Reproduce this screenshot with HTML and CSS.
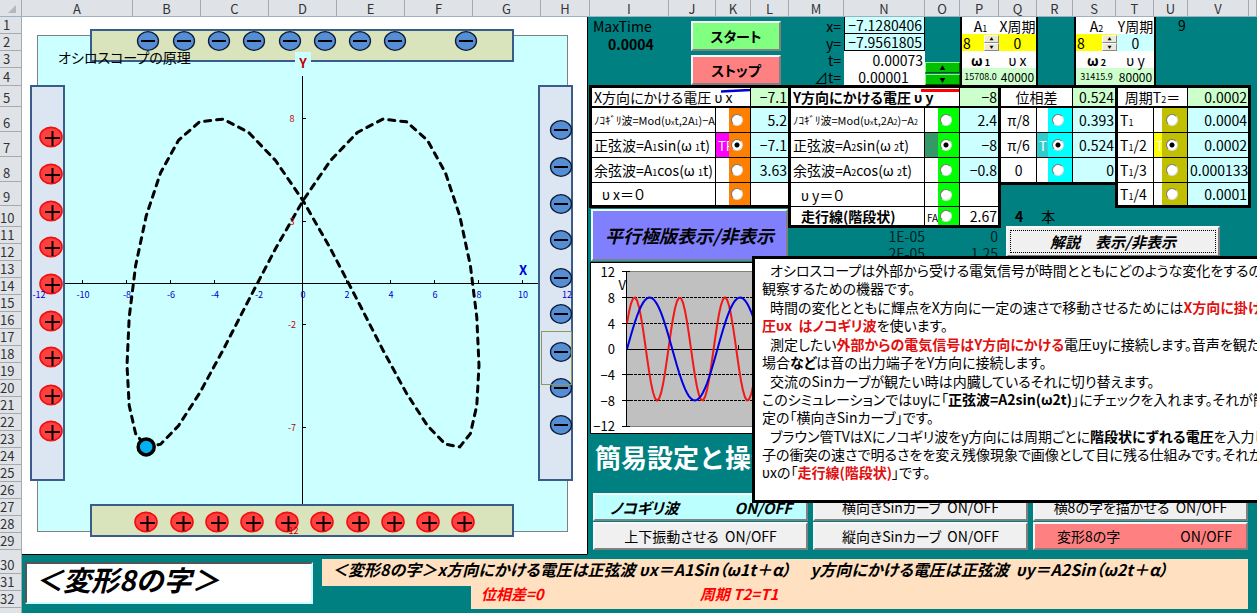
FILE: index.html
```
<!DOCTYPE html>
<html lang="ja">
  <head>
    <meta charset="UTF-8" />
    <meta name="viewport" content="width=device-width, initial-scale=1.0" />
    <title>オシロスコープの原理</title>
    <link rel="stylesheet" href="styles.css">
  </head>
  <body>
    <div class="sheet">
      <div class="cols" id="cols"></div>
      <div class="body">
        <div class="rows" id="rows"></div>
        <div class="main">
          <div class="upper">
            <!-- oscilloscope screen -->
            <svg class="scope" width="566" height="538" viewBox="22 17 566 538">
              <defs>
                <g id="minus">
                  <ellipse rx="10.5" ry="9.3" fill="#558ed5" stroke="#0d1a30" stroke-width="1.3" />
                  <path d="M-7 0H7" stroke="#000" stroke-width="2" />
                </g>
                <g id="plus">
                  <ellipse rx="11" ry="9.6" fill="#ff4040" stroke="#f01010" stroke-width="1.6" />
                  <path d="M-6 1H9M1.500 -6V9" stroke="#100" stroke-width="2" />
                </g>
              </defs>
              <rect x="22" y="17" width="566" height="538" fill="#fff" />
              <path d="M22 554.500H587.500V17" fill="none" stroke="#000" />
              <rect x="37.500" y="35.500" width="530" height="496" fill="#cff" stroke="#808080" />
              <path d="M302.500 76V531M37 283.500H568" stroke="#000" fill="none" />
              <path id="ticks" stroke="#000" fill="none" />
              <rect class="plate-y" x="91" y="30" width="422" height="31" />
              <rect class="plate-y" x="91" y="505" width="422" height="31" />
              <rect class="plate-x" x="31" y="86" width="33" height="394" />
              <rect class="plate-x" x="539" y="86" width="33" height="394" />
              <path id="curve" class="curve" />
              <g id="charges"></g>
              <rect x="541.500" y="331.500" width="30" height="53" fill="none" stroke="#8b9a5b" />
              <rect x="295" y="52" width="16" height="17" fill="#cff" />
              <text class="axis-name red" x="303" y="68">Y</text>
              <text class="axis-name blue" x="523" y="275">X</text>
              <g id="labels"></g>
              <circle id="spot" r="8" fill="#00b0f0" stroke="#000" stroke-width="3.500" />
              <text class="scope-title" x="58" y="63">オシロスコープの原理</text>
            </svg>

            <div class="panel">
              <div class="status">
                <div class="maxtime">
                  <div>MaxTime</div>
                  <b>0.0004</b>
                </div>
                <div class="run">
                  <button class="btn start">スタート</button>
                  <button class="btn stop">ストップ</button>
                </div>
                <table class="now">
                  <tr><th>x=</th><td class="calc">−7.1280406</td></tr>
                  <tr><th>y=</th><td class="calc">−7.9561805</td></tr>
                  <tr><th>t=</th><td>0.00073</td></tr>
                  <tr><th>⊿t=</th><td class="mid">0.00001</td></tr>
                </table>
                <div class="step">
                  <button aria-label="dt up">▲</button>
                  <button aria-label="dt down">▼</button>
                </div>
                <table class="amp ampx">
                  <tr><td>A<small>1</small></td><td>X周期</td></tr>
                  <tr>
                    <td class="yellow"><div class="spin"><span>8</span><span class="arrows"><button aria-label="A1 up">▲</button><button aria-label="A1 down">▼</button></span></div></td>
                    <td class="yellow">0</td>
                  </tr>
                  <tr><td><b>ω<small> 1</small></b></td><td>υ x</td></tr>
                  <tr><td class="lime tiny">15708.0</td><td class="lime narrow">40000</td></tr>
                </table>
                <table class="amp ampy">
                  <tr><td>A<small>2</small></td><td>Y周期</td></tr>
                  <tr>
                    <td class="yellow"><div class="spin"><span>8</span><span class="arrows"><button aria-label="A2 up">▲</button><button aria-label="A2 down">▼</button></span></div></td>
                    <td class="cyan">0</td>
                  </tr>
                  <tr><td><b>ω<small> 2</small></b></td><td>υ y</td></tr>
                  <tr><td class="lime tiny">31415.9</td><td class="lime narrow">80000</td></tr>
                </table>
                <div class="nine">9</div>
              </div>

              <div class="tables">
                <div class="left">
                  <table class="set setx">
                    <colgroup><col class="w124"><col class="w35"><col class="w37"></colgroup>
                    <tr class="head"><td colspan="2">X方向にかける電圧 υ x<svg class="mark" width="29" height="4"><path d="M0 2.500L29 1" stroke="#0000d0" stroke-width="2.500" /></svg></td><td class="num lime">−7.1</td></tr>
                    <tr><td class="small"><label for="x1">ﾉｺｷﾞﾘ波=Mod(υ<sub>x</sub>t,2A<sub>1</sub>)−A<sub>1</sub></label></td><td class="opt"><span class="orange"><input type="radio" name="vx" id="x1"></span></td><td class="num cyan">5.2</td></tr>
                    <tr><td><label for="x2">正弦波=A<small>1</small>sin(ω <small>1</small>t)</label></td><td class="opt magenta"><i>TRUE</i><span class="orange"><input type="radio" name="vx" id="x2" checked></span></td><td class="num cyan">−7.1</td></tr>
                    <tr><td><label for="x3">余弦波=A<small>1</small>cos(ω <small>1</small>t)</label></td><td class="opt"><span class="orange"><input type="radio" name="vx" id="x3"></span></td><td class="num cyan">3.63</td></tr>
                    <tr><td class="indent"><label for="x4">υ x＝０</label></td><td class="opt"><span class="orange"><input type="radio" name="vx" id="x4"></span></td><td></td></tr>
                  </table>
                  <button class="btn plates">平行極版表示/非表示</button>
                  <svg class="wave" width="199" height="172" viewBox="590 262 199 172">
                    <rect x="590.500" y="262.500" width="198" height="171" fill="#fff" stroke="#000" />
                    <rect x="626" y="271" width="163" height="156" fill="#c0c0c0" />
                    <path d="M626 271.500H789M626 426.500H789" stroke="#808080" />
                    <path d="M626 297.500H789M626 323.500H789M626 374.500H789M626 400.500H789" stroke="#000" stroke-dasharray="3 1" />
                    <path d="M626.500 271V427M626 349.500H789M738.500 345V349M622 271.500H630M622 297.500H630M622 323.500H630M622 374.500H630M622 400.500H630M622 426.500H630" stroke="#000" />
                    <path id="wave2" fill="none" stroke="#f01818" stroke-width="2" />
                    <path id="wave1" fill="none" stroke="#0000e0" stroke-width="2" />
                    <g class="wave-label">
                      <text x="615" y="277">12</text>
                      <text x="615" y="303">8</text>
                      <text x="615" y="329">4</text>
                      <text x="615" y="354">0</text>
                      <text x="615" y="380">−4</text>
                      <text x="615" y="406">−8</text>
                      <text x="615" y="431">−12</text>
                      <text x="626" y="290">V</text>
                    </g>
                  </svg>
                  <h2>簡易設定と操作</h2>
                </div>

                <div class="center">
                  <table class="set sety">
                    <colgroup><col class="w134"><col class="w35"><col class="w38"></colgroup>
                    <tr class="head"><td colspan="2"><b>Y方向にかける電圧 υ y</b><svg class="mark" width="38" height="3"><path d="M0 1.500H38" stroke="#f00" stroke-width="3" /></svg></td><td class="num lime">−8</td></tr>
                    <tr><td class="small"><label for="y1">ﾉｺｷﾞﾘ波=Mod(υ<sub>x</sub>t,2A<sub>2</sub>)−A<sub>2</sub></label></td><td class="opt"><span class="green"><input type="radio" name="vy" id="y1"></span></td><td class="num cyan">2.4</td></tr>
                    <tr><td><label for="y2">正弦波=A<small>2</small>sin(ω <small>2</small>t)</label></td><td class="opt sea"><span class="green"><input type="radio" name="vy" id="y2" checked></span></td><td class="num cyan">−8</td></tr>
                    <tr><td><label for="y3">余弦波=A<small>2</small>cos(ω <small>2</small>t)</label></td><td class="opt"><span class="green"><input type="radio" name="vy" id="y3"></span></td><td class="num cyan">−0.8</td></tr>
                    <tr><td class="indent"><label for="y4">υ y＝０</label></td><td class="opt"><span class="green"><input type="radio" name="vy" id="y4"></span></td><td></td></tr>
                    <tr class="low"><td class="indent"><label for="y5"><b>走行線(階段状)</b></label></td><td class="opt false"><i>FALSE</i><span class="green"><input type="radio" name="vy" id="y5"></span></td><td class="num">2.67</td></tr>
                  </table>
                  <div class="cells"><span>1E-05</span><span>0</span></div>
                  <div class="cells"><span>2E-05</span><span>1.25</span></div>
                </div>

                <div class="right">
                  <div class="pair">
                    <table class="set phase">
                      <colgroup><col class="w36"><col class="w36"><col class="w42"></colgroup>
                      <tr class="head"><td colspan="2" class="mid">位相差</td><td class="num lime">0.524</td></tr>
                      <tr><td class="mid"><label for="p1">π/8</label></td><td class="opt"><span class="aqua"><input type="radio" name="ph" id="p1"></span></td><td class="num cyan">0.393</td></tr>
                      <tr><td class="mid"><label for="p2">π/6</label></td><td class="opt teal"><i>TRUE</i><span class="aqua"><input type="radio" name="ph" id="p2" checked></span></td><td class="num cyan">0.524</td></tr>
                      <tr><td class="mid"><label for="p3">0</label></td><td class="opt"><span class="aqua"><input type="radio" name="ph" id="p3"></span></td><td class="num cyan">0</td></tr>
                    </table>
                    <table class="set period">
                      <colgroup><col class="w36"><col class="w34"><col class="w60"></colgroup>
                      <tr class="head"><td colspan="2" class="mid">周期T<small>2</small>＝</td><td class="num lime">0.0002</td></tr>
                      <tr><td><label for="t1">T<small>1</small></label></td><td class="opt"><span class="olive"><input type="radio" name="tt" id="t1"></span></td><td class="num cyan">0.0004</td></tr>
                      <tr><td><label for="t2">T<small>1</small>/2</label></td><td class="opt yellow"><i>TRUE</i><span class="olive"><input type="radio" name="tt" id="t2" checked></span></td><td class="num cyan">0.0002</td></tr>
                      <tr><td><label for="t3">T<small>1</small>/3</label></td><td class="opt"><span class="olive"><input type="radio" name="tt" id="t3"></span></td><td class="num cyan">0.000133</td></tr>
                      <tr><td><label for="t4">T<small>1</small>/4</label></td><td class="opt"><span class="olive"><input type="radio" name="tt" id="t4"></span></td><td class="num cyan">0.0001</td></tr>
                    </table>
                  </div>
                  <div class="lines"><b>4</b><span>本</span></div>
                  <button class="btn explain-btn">解説　表示/非表示</button>
                </div>
              </div>

              <div class="modes">
                <button class="btn saw"><span>ノコギリ波</span><span>ON/OFF</span></button>
                <button class="btn">横向きSinカーブ&nbsp; ON/OFF</button>
                <button class="btn">横8の字を描かせる&nbsp; ON/OFF</button>
                <button class="btn">上下振動させる&nbsp; ON/OFF</button>
                <button class="btn">縦向きSinカーブ&nbsp; ON/OFF</button>
                <button class="btn eight"><span>変形8の字</span><span>ON/OFF</span></button>
              </div>

              <!-- help text, floats over the chart and the buttons -->
              <div class="explain">
                <p>オシロスコープは外部から受ける電気信号が時間とともにどのような変化をするのかを<br>観察するための機器です。</p>
                <p>時間の変化とともに輝点をX方向に一定の速さで移動させるためには<b class="hot">X方向に掛ける電</b><br><b class="hot">圧υx&nbsp; はノコギリ波</b>を使います。</p>
                <p>測定したい<b class="hot">外部からの電気信号はY方向にかける</b>電圧υyに接続します。音声を観たい<br>場合<b>など</b>は音の出力端子をY方向に接続します。</p>
                <p>交流のSinカーブが観たい時は内臓しているそれに切り替えます。<br>このシミュレーションではυyに「<b>正弦波=A2sin(ω2t)</b>」にチェックを入れます。それが簡易設<br>定の「横向きSinカーブ」です。</p>
                <p>ブラウン管TVはXにノコギリ波をy方向には周期ごとに<b>階段状にずれる電圧</b>を入力して<br>子の衝突の速さで明るさをを変え残像現象で画像として目に残る仕組みです。それが<br>υxの「<b class="hot">走行線(階段状)</b>」です。</p>
              </div>
            </div>
          </div>

          <div class="lower">
            <input class="mode-name" type="text" aria-label="モード" value="＜変形8の字＞">
            <div class="formula">
              <div class="f1">＜変形8の字＞x方向にかける電圧は正弦波 υx＝A1Sin（ω1t＋α）&nbsp;　y方向にかける電圧は正弦波&nbsp; υy＝A2Sin（ω2t＋α）</div>
              <div class="f2"><span>位相差=0</span><span>周期 T2=T1</span></div>
            </div>
          </div>
        </div>
      </div>
    </div>
    <script src="script.js"></script>
  </body>
</html>
```
FILE: styles.css
```
* {
  box-sizing: border-box;
}
body {
  margin: 0;
  background: #008080;
  font-family: "Noto Sans CJK JP", sans-serif;
  font-feature-settings: "palt";
  font-size: 14px;
  line-height: 17px;
  color: #000;
}
.sheet {
  display: flex;
  flex-direction: column;
  height: 100vh;
  overflow: hidden;
}
p,
h2 {
  margin: 0;
}
button,
input {
  font: inherit;
  font-feature-settings: inherit;
  color: inherit;
  margin: 0;
}
table {
  border-collapse: separate;
  border-spacing: 0;
  table-layout: fixed;
}
td,
th {
  padding: 0;
  font-weight: normal;
  white-space: nowrap;
}
small {
  font-size: 9px;
  line-height: 0;
}

/* headings of the sheet */
.cols {
  display: flex;
  flex: none;
  height: 17px;
  background: #dfe3e8;
  border-bottom: 1px solid #9eb0c4;
}
.cols div {
  flex: none;
  border-right: 1px solid #a6a9ad;
  text-align: center;
  font-size: 13px;
  color: #333;
}
.cols div:first-child {
  display: flex;
  justify-content: flex-end;
  padding: 5px 5px 0 0;
}
.cols div:last-child {
  flex: 1;
}
.corner {
  fill: #b4b8bd;
}
.body {
  display: flex;
  flex: 1;
  min-height: 0;
}
.rows {
  flex: none;
  width: 22px;
  background: #dfe3e8;
  border-right: 1px solid #a6a9ad;
}
.rows div {
  display: flex;
  align-items: flex-end;
  padding-left: 3px;
  border-bottom: 1px solid #a6a9ad;
  font-size: 13px;
  color: #333;
}
.rows div.two {
  padding-left: 0;
}
.main {
  flex: 1;
  min-width: 0;
}
.upper {
  display: flex;
}

/* oscilloscope */
.scope {
  flex: none;
  display: block;
}
.plate-y,
.plate-x {
  fill: #d9e4bd;
  stroke: #385d8a;
  stroke-width: 2;
}
.plate-x {
  fill: #dce6f2;
}
.curve {
  fill: none;
  stroke: #000;
  stroke-width: 3;
  stroke-linecap: round;
  stroke-dasharray: 6 6;
}
.axis-name {
  font-size: 13px;
  font-weight: bold;
  text-anchor: middle;
}
.red {
  fill: #c00000;
}
.blue {
  fill: #0000d0;
}
.tick {
  font-size: 9px;
  text-anchor: middle;
}
.scope-title {
  font-size: 14px;
}

/* upper right */
.panel {
  position: relative;
  flex: 1;
  min-width: 0;
}
.status {
  display: flex;
  height: 68px;
}
.maxtime {
  width: 101px;
  padding-left: 5px;
  line-height: 18px;
}
.maxtime b {
  padding-left: 15px;
}
.run {
  display: flex;
  flex-direction: column;
  gap: 4px;
  width: 100px;
  padding: 4px 0 0 2px;
}
.btn {
  padding: 0;
  border: 2px solid;
  border-color: #f4f8f8 #808080 #808080 #f4f8f8;
  background: #f0f0f0;
  white-space: nowrap;
}
.start,
.stop {
  width: 90px;
  height: 30px;
  font-weight: bold;
}
.start {
  background: #80ff80;
}
.stop {
  background: #ff8080;
}
.now th {
  width: 55px;
  padding-right: 3px;
  text-align: right;
}
.now td {
  width: 81px;
  padding-right: 2px;
  background: #fff;
  text-align: right;
}
.now th,
.now td,
.amp td {
  height: 17px;
  line-height: 16px;
}
.now .calc {
  background: #cff;
  border: 1px solid #000;
  border-top: 0;
}
.mid,
.now .mid {
  text-align: center;
}
.step {
  display: flex;
  flex-direction: column;
  justify-content: flex-end;
  gap: 1px;
  width: 35px;
}
.step button {
  height: 11px;
  padding: 0;
  border: 1px solid;
  border-color: #8f8 #050 #050 #8f8;
  background: #00c000;
  font-size: 6px;
  line-height: 8px;
}
.amp {
  height: 68px;
  border-right: 2px solid #000;
  border-left: 2px solid #000;
  text-align: center;
}
.amp td {
  width: 37px;
  background: #fff;
}
.ampy {
  margin-left: 36px;
}
.ampy td:first-child {
  width: 41px;
}
.amp .tiny {
  font-size: 9px;
}
.amp .narrow {
  font-size: 12px;
}
.amp .yellow,
.set .yellow {
  background: #ff0;
}
.amp .cyan,
.set .cyan {
  background: #cff;
}
.amp .lime,
.set .lime {
  background: #cfc;
}
.spin {
  display: flex;
  justify-content: space-between;
  padding-left: 1px;
}
.arrows {
  display: flex;
  flex-direction: column;
  width: 15px;
}
.arrows button {
  height: 8px;
  padding: 0;
  border: 1px solid;
  border-color: #fff #888 #888 #fff;
  background: #ece9d8;
  font-size: 4px;
  line-height: 6px;
}
.nine {
  padding-left: 22px;
}

/* setting tables */
.tables {
  display: flex;
  align-items: flex-start;
  height: 408px;
}
.left {
  flex: none;
  width: 202px;
  margin-left: 1px;
}
.center,
.right {
  margin-left: -3px;
}
.pair {
  display: flex;
  align-items: flex-start;
  height: 123px;
}
.set {
  border: 3px solid #000;
}
.set td {
  position: relative;
  height: 25px;
  padding: 0 2px;
  background: #fff;
  border-right: 1px solid #000;
  border-bottom: 1px solid #000;
  line-height: 20px;
}
.set td:last-child {
  border-right: 0;
}
.set .head td {
  height: 20px;
  border-bottom-width: 2px;
  line-height: 18px;
}
.set tr:last-child td {
  height: 22px;
  border-bottom: 0;
}
.set.phase tr:last-child td {
  height: 24px;
}
.set.sety tr:nth-child(5) td {
  height: 24px;
}
.set.sety .low td {
  height: 18px;
  line-height: 16px;
}
.period {
  margin-left: -3px;
}
.w34 { width: 34px; }
.w35 { width: 35px; }
.w36 { width: 36px; }
.w37 { width: 37px; }
.w38 { width: 38px; }
.w42 { width: 42px; }
.w60 { width: 60px; }
.w124 { width: 124px; }
.w134 { width: 134px; }
.setx { width: 202px; }
.sety { width: 213px; }
.phase { width: 120px; }
.period { width: 136px; }
.set .num {
  padding-right: 1px;
  text-align: right;
}
.set .small {
  font-size: 11px;
}
.setx .small {
  padding-right: 0;
}
.set .indent {
  padding-left: 10px;
}
sub {
  font-size: 7px;
  line-height: 0;
  vertical-align: baseline;
}
.mark {
  position: absolute;
  top: 1px;
  right: 0;
}
.set .opt {
  padding: 0;
  overflow: hidden;
}
.opt i {
  padding-left: 2px;
  font-size: 13px;
  font-style: normal;
  color: #fff;
}
.opt.false i {
  font-size: 10px;
  line-height: 0;
  color: #000;
}
.opt span {
  position: absolute;
  top: 0;
  right: 0;
  bottom: 0;
  display: flex;
  align-items: center;
  justify-content: center;
  width: 21px;
}
.opt input {
  appearance: none;
  width: 12px;
  height: 12px;
  margin-right: 5px;
  border: 1px solid;
  border-color: #777 #ddd #ddd #777;
  border-radius: 50%;
  background: #fff;
}
.opt input:checked {
  background: radial-gradient(circle, #000 2px, #fff 3px);
}
.opt .orange {
  background: #ff8000;
}
.opt .green {
  background: #0f0;
}
.opt .aqua {
  width: 24px;
  background: #0ff;
}
.opt .olive {
  width: 25px;
  background: #c0c000;
}
.set .magenta {
  background: #f0f;
}
.set .sea {
  background: #339966;
}
.set .teal {
  background: #33cccc;
}
.plates {
  display: block;
  width: 197px;
  height: 52px;
  margin: 1px 0 1px 2px;
  background: #8080ff;
  font-size: 18px;
  font-feature-settings: normal;
  font-weight: bold;
  font-style: italic;
}
.wave {
  display: block;
  margin-left: 1px;
}
.wave-label {
  font-size: 13px;
  text-anchor: end;
}
h2 {
  padding: 8px 0 0 6px;
  color: #fff;
  font-size: 26px;
  font-feature-settings: normal;
  line-height: 30px;
  white-space: nowrap;
}
.cells {
  display: flex;
  justify-content: flex-end;
  height: 17px;
  padding-right: 3px;
  color: #022;
}
.cells span {
  width: 73px;
  text-align: right;
}
.lines {
  display: flex;
  gap: 18px;
  height: 18px;
  padding-left: 17px;
}
.explain-btn {
  width: 214px;
  height: 31px;
  margin-left: 8px;
  outline: 1px dotted #000;
  outline-offset: -5px;
  font-size: 15px;
  font-weight: bold;
  font-style: italic;
}

/* mode buttons */
.modes {
  display: grid;
  grid-template-columns: repeat(3, 215px);
  grid-auto-rows: 28px;
  gap: 1px 5px;
  padding-left: 5px;
}
.modes .saw,
.modes .eight {
  display: flex;
  align-items: center;
  justify-content: space-between;
  padding: 0 14px 0 22px;
}
.modes .saw {
  padding-left: 15px;
  background: #bff;
  font-size: 15px;
  font-weight: bold;
  font-style: italic;
}
.modes .eight {
  background: #ff8080;
}

.explain {
  position: absolute;
  top: 239px;
  right: 0;
  left: 164px;
  height: 247px;
  padding: 2px 0 0 7px;
  overflow: hidden;
  background: #fff;
  border: 3px solid #000;
  border-right: 0;
  line-height: 18px;
  white-space: nowrap;
}
.explain p {
  margin-bottom: 1px;
  text-indent: 8px;
}
.hot {
  color: #e01010;
}

/* current mode and its formula */
.lower {
  display: flex;
  align-items: flex-start;
  gap: 9px;
  padding: 4px 9px 0 3px;
}
.mode-name {
  flex: none;
  width: 288px;
  height: 42px;
  margin-top: 3px;
  padding: 0 8px 8px;
  border: 2px solid;
  border-color: #555 #cff #cff #555;
  background: #fff;
  font-size: 28px;
  font-feature-settings: normal;
  font-weight: bold;
  font-style: italic;
}
.formula {
  flex: 1;
  min-width: 0;
  font-size: 16px;
  font-weight: bold;
  font-style: italic;
  white-space: nowrap;
}
.f1 {
  height: 27px;
  padding-left: 10px;
  background: #ffe0c0;
  line-height: 20px;
}
.f2 {
  display: flex;
  gap: 156px;
  height: 23px;
  margin-left: 149px;
  padding-left: 10px;
  background: #ffe0c0;
  color: #f00;
  font-size: 15px;
  line-height: 16px;
}
```
FILE: script.js
```
const SVG = "http://www.w3.org/2000/svg";

// sheet headings
const colWidths = [22, 111, 68, 68, 68, 68, 68, 68, 49, 79, 47, 35, 38, 55, 81, 35, 39, 38, 36, 43, 38, 34, 61, 0];
const cols = document.getElementById("cols");
colWidths.forEach((w, i) => {
  const div = document.createElement("div");
  if (w) div.style.width = w + "px";
  if (i === 0) {
    div.innerHTML = '<svg width="8" height="8"><path class="corner" d="M8 0V8H0Z" /></svg>';
  } else if (w) {
    div.textContent = String.fromCharCode(64 + i);
  }
  cols.appendChild(div);
});

const rowHeights = [17, 17, 17, 18, 21, 25, 25, 25, 24, 21];
for (let i = 11; i < 33; i++) rowHeights.push(i === 30 ? 24 : 17);
const rows = document.getElementById("rows");
rowHeights.forEach((h, i) => {
  const div = document.createElement("div");
  div.style.height = h + "px";
  if (i > 8) div.className = "two";
  div.textContent = i + 1;
  rows.appendChild(div);
});

// x = 8 sin(a), y = 8 sin(2a + 30deg), drawn in steps of 9 degrees
const px = (x) => 303 + x * 22;
const py = (y) => 283 - y * 20.6;
const rad = Math.PI / 180;
let d = "";
for (let a = -63; a <= 297; a += 9) {
  const x = px(8 * Math.sin(a * rad)).toFixed(1);
  const y = py(8 * Math.sin((2 * a + 30) * rad)).toFixed(1);
  d += (d ? "L" : "M") + x + " " + y;
}
document.getElementById("curve").setAttribute("d", d);
const spot = document.getElementById("spot");
spot.setAttribute("cx", px(-7.1280406));
spot.setAttribute("cy", py(-7.9561805));

// axis ticks and labels
const labels = document.getElementById("labels");
function label(x, y, text, color) {
  const t = document.createElementNS(SVG, "text");
  t.setAttribute("x", x);
  t.setAttribute("y", y);
  t.setAttribute("class", "tick " + color);
  t.textContent = text;
  labels.appendChild(t);
}
let ticks = "";
for (let x = -12; x <= 12; x += 2) {
  ticks += `M${px(x) - 0.5} 280V284`;
  label(px(x), 298, x, "blue");
}
for (let y = -12; y <= 8; y += 5) {
  ticks += `M302 ${Math.round(py(y)) + 0.5}H306`;
  label(292, py(y) + 4, y, "red");
}
document.getElementById("ticks").setAttribute("d", ticks);

// charges on the plates
const charges = document.getElementById("charges");
function charge(id, x, y) {
  const u = document.createElementNS(SVG, "use");
  u.setAttribute("href", "#" + id);
  u.setAttribute("x", x);
  u.setAttribute("y", y);
  charges.appendChild(u);
}
[148, 184, 219, 254, 290, 325, 360, 395, 466].forEach((x) => charge("minus", x, 41));
[146, 182, 217, 252, 287, 322, 358, 393, 428, 463].forEach((x) => charge("plus", x, 522));
[137, 174, 211, 247, 284, 321, 357, 395, 431].forEach((y) => charge("plus", 51, y));
[130, 167, 204, 240, 278, 314, 352, 388, 425].forEach((y) => charge("minus", 561, y));

// voltage against time
function wave(id, period, phase) {
  let p = "";
  for (let x = 0; x <= 163; x += 2) {
    const y = 349 - 51.5 * Math.sin((x / period) * 2 * Math.PI + phase);
    p += (p ? "L" : "M") + (627 + x) + " " + y.toFixed(1);
  }
  document.getElementById(id).setAttribute("d", p);
}
wave("wave2", 45.2, Math.PI / 6);
wave("wave1", 90.5, 0);
```
